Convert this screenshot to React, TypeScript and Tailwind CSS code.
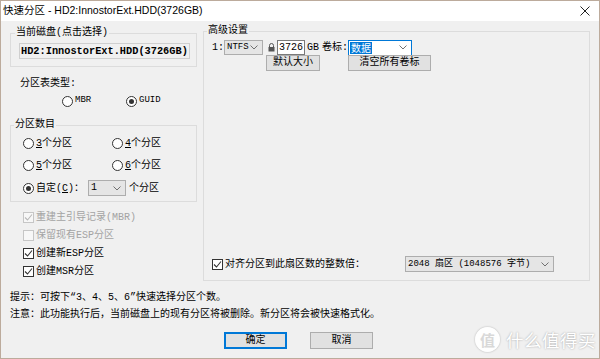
import React from "react";

const ui = { fontFamily: '"Liberation Mono", "Noto Sans CJK SC", monospace' };
const cjk = { fontFamily: '"Noto Sans CJK SC", "Liberation Sans", sans-serif' };

const Chevron = ({ color = "#707070" }: { color?: string }) => (
	<svg width="8" height="5" viewBox="0 0 8 5" className="shrink-0">
		<polyline points="0.5,0.5 4,4 7.5,0.5" fill="none" stroke={color} strokeWidth="1" />
	</svg>
);

const Radio = ({ checked }: { checked?: boolean }) => (
	<span className="w-[11px] h-[11px] rounded-full border border-[#333] bg-white flex items-center justify-center shrink-0">
		{checked && <span className="w-[5px] h-[5px] rounded-full bg-[#333]" />}
	</span>
);

const Check = ({ checked, disabled }: { checked?: boolean; disabled?: boolean }) => (
	<span
		className={`w-[11px] h-[11px] border flex items-center justify-center shrink-0 ${
			disabled ? "border-[#c6c6c6] bg-[#f7f7f7]" : "border-[#333] bg-white"
		}`}>
		{checked && (
			<svg width="9" height="9" viewBox="0 0 9 9">
				<polyline points="1,4.5 3.5,7 8,1.5" fill="none" stroke={disabled ? "#b8b8b8" : "#333"} strokeWidth="1.1" />
			</svg>
		)}
	</span>
);

const Combo = ({ children, className = "" }: { children: React.ReactNode; className?: string }) => (
	<div className={`border border-[#adadad] bg-[#e5e5e5] flex items-center justify-between pl-[2px] pr-[4px] ${className}`}>
		<span className="leading-none whitespace-nowrap">{children}</span>
		<Chevron />
	</div>
);

const Btn = ({ children, className = "" }: { children: React.ReactNode; className?: string }) => (
	<div className={`border bg-[#e1e1e1] flex items-center justify-center leading-none ${className}`}>{children}</div>
);

const Lock = () => (
	<svg width="7" height="9" viewBox="0 0 7 9" className="shrink-0">
		<path d="M1.5 4V2.5a2 2 0 0 1 4 0V4" fill="none" stroke="#555" strokeWidth="1" />
		<rect x="0.5" y="4" width="6" height="4.5" fill="#555" />
	</svg>
);

export default function App() {
	return (
		<div className="w-[600px] h-[359px] border border-[#bcab9c] flex flex-col text-[10px] text-black bg-[#f0f0f0]" style={ui}>
			{/* title bar */}
			<div className="h-[20px] bg-white flex items-center justify-between pl-[2px] pr-[9px] shrink-0">
				<span className="text-[10.5px] text-black" style={{ fontFamily: '"Liberation Sans", "Noto Sans CJK SC", sans-serif' }}>
					快速分区 - HD2:InnostorExt.HDD(3726GB)
				</span>
				<svg width="10" height="10" viewBox="0 0 10 10">
					<path d="M0.5 0.5 L9.5 9.5 M9.5 0.5 L0.5 9.5" stroke="#222" strokeWidth="1" />
				</svg>
			</div>

			<div className="relative flex-1 flex flex-col pl-[9px] pr-[7px]">
				<div className="flex items-start gap-[6px]">
					{/* left column */}
					<div className="w-[187px] flex flex-col">
						<fieldset className="mt-[5px] border border-[#dcdcdc] pb-[7px]">
							<legend className="ml-[4px] px-[1px] leading-[14px]">当前磁盘(点击选择)</legend>
							<div className="mt-[3px] ml-[8px] w-[171px] h-[16px] border border-[#cfcfcf] flex items-center pl-[1px] font-bold text-[10.3px] leading-none">
								HD2:InnostorExt.HDD(3726GB)
							</div>
						</fieldset>

						<div className="mt-[10px] pl-[10px] h-[14px] leading-[14px]">分区表类型:</div>
						<div className="mt-[3px] h-[14px] pl-[52px] flex items-center">
							<div className="w-[64px] flex items-center gap-[2px]">
								<Radio />
								<span className="text-[9px]">MBR</span>
							</div>
							<div className="flex items-center gap-[2px]">
								<Radio checked />
								<span className="text-[9px]">GUID</span>
							</div>
						</div>

						<fieldset className="mt-[10px] border border-[#dcdcdc] pb-[5px]">
							<legend className="ml-[3px] px-[1px] leading-[14px]">分区数目</legend>
							<div className="mt-[4px] h-[14px] pl-[12px] flex items-center">
								<div className="w-[89px] flex items-center gap-[2px]">
									<Radio />
									<span>
										<u>3</u>个分区
									</span>
								</div>
								<div className="flex items-center gap-[2px]">
									<Radio />
									<span>
										<u>4</u>个分区
									</span>
								</div>
							</div>
							<div className="mt-[8px] h-[14px] pl-[12px] flex items-center">
								<div className="w-[89px] flex items-center gap-[2px]">
									<Radio />
									<span>
										<u>5</u>个分区
									</span>
								</div>
								<div className="flex items-center gap-[2px]">
									<Radio />
									<span>
										<u>6</u>个分区
									</span>
								</div>
							</div>
							<div className="mt-[8px] h-[16px] pl-[12px] flex items-center">
								<div className="w-[65px] flex items-center gap-[2px]">
									<Radio checked />
									<span>
										自定(<u>C</u>)：
									</span>
								</div>
								<Combo className="w-[38px] h-[16px]">1</Combo>
								<span className="ml-[3px]">个分区</span>
							</div>
						</fieldset>

						<div className="mt-[6px] pl-[13px] flex flex-col">
							<div className="h-[18px] flex items-center gap-[2px] text-[#a3a3a3]">
								<Check checked disabled />
								<span>重建主引导记录(MBR)</span>
							</div>
							<div className="h-[18px] flex items-center gap-[2px] text-[#a3a3a3]">
								<Check disabled />
								<span>保留现有ESP分区</span>
							</div>
							<div className="h-[18px] flex items-center gap-[2px]">
								<Check checked />
								<span>创建新ESP分区</span>
							</div>
							<div className="h-[18px] flex items-center gap-[2px]">
								<Check checked />
								<span>创建MSR分区</span>
							</div>
						</div>
					</div>

					{/* advanced settings */}
					<fieldset className="mt-[3px] w-[387px] h-[257px] border border-[#dcdcdc]">
						<legend className="ml-[3px] px-[1px] leading-[14px]">高级设置</legend>
						<div className="mt-[2px] h-[15px] pl-[8px] flex items-center">
							<span className="w-[12px]">1:</span>
							<Combo className="w-[39px] h-[15px] text-[9px]">NTFS</Combo>
							<span className="ml-[5px]">
								<Lock />
							</span>
							<div className="ml-[2px] w-[28px] h-[15px] border border-[#7a7a7a] bg-white flex items-center pl-[1px] leading-none">3726</div>
							<span className="ml-[2px]">GB</span>
							<span className="ml-[3px]">卷标:</span>
							<div className="w-[64px] h-[16px] border border-[#0078d7] bg-white flex items-center justify-between pl-[1px] pr-[4px]">
								<span className="bg-[#0078d7] text-white leading-[12px] px-[1px]" style={cjk}>
									数据
								</span>
								<Chevron />
							</div>
						</div>
						<div className="h-[16px] pl-[62px] flex items-center">
							<Btn className="w-[54px] h-[16px] border-[#adadad]">默认大小</Btn>
							<Btn className="ml-[28px] w-[83px] h-[16px] border-[#adadad]">清空所有卷标</Btn>
						</div>
						<div className="mt-[185px] h-[16px] pl-[8px] flex items-center">
							<div className="w-[193px] flex items-center gap-[2px]">
								<Check checked />
								<span>对齐分区到此扇区数的整数倍：</span>
							</div>
							<Combo className="w-[149px] h-[16px] text-[9px]">2048 扇区 (1048576 字节)</Combo>
						</div>
					</fieldset>
				</div>

				<div className="mt-[10px] h-[14px] leading-[14px]">提示：可按下“3、4、5、6”快速选择分区个数。</div>
				<div className="mt-[3px] h-[14px] leading-[14px]">注意：此功能执行后，当前磁盘上的现有分区将被删除。新分区将会被快速格式化。</div>

				<div className="mt-[10px] pl-[214px] flex gap-[23px]">
					<Btn className="w-[63px] h-[17px] border-[#0078d7] shadow-[inset_0_0_0_1px_#0078d7]">确定</Btn>
					<Btn className="w-[63px] h-[17px] border-[#adadad]">取消</Btn>
				</div>

				{/* watermark */}
				<div className="absolute right-[3px] bottom-[6px] flex items-center gap-[6px] text-white" style={cjk}>
					<span className="w-[25px] h-[25px] rounded-full bg-white/90 flex items-center justify-center text-[15px] text-[#d8d8d8] font-bold leading-none shadow-[0_0_2px_rgba(0,0,0,0.3)]">
						值
					</span>
					<span className="text-[17.5px] leading-none tracking-[0.5px] [text-shadow:0_0_2px_rgba(0,0,0,0.35)]">什么值得买</span>
				</div>
			</div>
		</div>
	);
}
